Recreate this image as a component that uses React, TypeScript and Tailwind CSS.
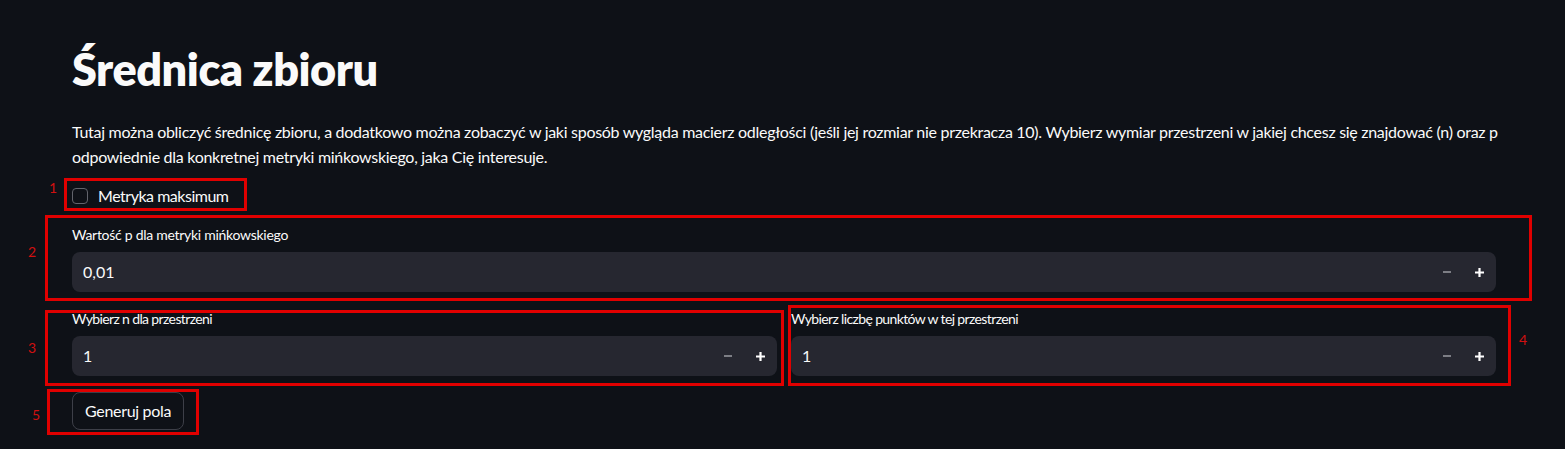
import { useState } from 'react';

const font = { fontFamily: '"Source Sans Pro", Lato, "Noto Sans", sans-serif' };

function Marker({ n, className, box }: { n: string; className: string; box: string }) {
  return (
    <>
      <div className={`pointer-events-none absolute border-[3px] border-[#e00000] ${box}`} />
      <span className={`pointer-events-none absolute text-[14px] leading-none text-[#d01010] ${className}`}>{n}</span>
    </>
  );
}

function NumberInput({ label, value, tight }: { label: string; value: string; tight?: boolean }) {
  return (
    <div className="flex flex-col">
      <label
        className={`mb-[7px] text-[14px] leading-5 text-[#fafafa] ${tight ? 'tracking-[-0.045em]' : 'tracking-[-0.02em]'}`}
      >
        {label}
      </label>
      <div className="flex h-10 items-center rounded-lg bg-[#262730] pl-[11px] pr-[1px]">
        <input
          defaultValue={value}
          className="flex-1 bg-transparent text-[16px] text-[#fafafa] outline-none"
        />
        <button className="flex h-8 w-8 items-center justify-center">
          <svg width="10" height="10" viewBox="0 0 10 10">
            <path d="M1 5h8" stroke="#7d7e85" strokeWidth="2" />
          </svg>
        </button>
        <button className="flex h-8 w-8 items-center justify-center">
          <svg width="11" height="11" viewBox="0 0 11 11">
            <path d="M1 5.5h9M5.5 1v9" stroke="#ffffff" strokeWidth="2.2" />
          </svg>
        </button>
      </div>
    </div>
  );
}

export default function App() {
  const [checked, setChecked] = useState(false);

  return (
    <div className="relative min-h-[449px] bg-[#0e1117] text-[#fafafa]" style={font}>
      <div className="w-[1496px] pl-[72px] pt-[42px]">
        <h1 className="text-[45px] font-extrabold leading-[1.2] tracking-[-0.01em]">Średnica zbioru</h1>
        <p className="mt-[23px] whitespace-nowrap text-[16px] leading-[25px] tracking-[-0.018em]">
          Tutaj można obliczyć średnicę zbioru, a dodatkowo można zobaczyć w jaki sposób wygląda macierz odległości (jeśli
          jej rozmiar nie przekracza 10). Wybierz wymiar przestrzeni w jakiej chcesz się znajdować (n) oraz p
          <br />
          odpowiednie dla konkretnej metryki mińkowskiego, jaka Cię interesuje.
        </p>

        <label className="mt-[12px] flex w-fit cursor-pointer items-center gap-[10px] py-[3px]">
          <span
            onClick={() => setChecked(!checked)}
            className="h-4 w-4 rounded-[4px] border border-[#62646c] bg-[#0e1117]"
          />
          <span className="text-[16px] leading-6 tracking-[-0.03em]">Metryka maksimum</span>
        </label>

        <div className="mt-[14px]">
          <NumberInput label="Wartość p dla metryki mińkowskiego" value="0,01" />
        </div>

        <div className="mt-[17px] grid grid-cols-2 gap-[14px]">
          <NumberInput label="Wybierz n dla przestrzeni" value="1" tight />
          <NumberInput label="Wybierz liczbę punktów w tej przestrzeni" value="1" tight />
        </div>

        <button className="mt-[16px] h-[38px] rounded-lg border border-[#3d3f48] px-[12px] text-[16px] tracking-[-0.02em] text-[#fafafa]">
          Generuj pola
        </button>
      </div>

      <Marker n="1" box="left-[64px] top-[178px] w-[183px] h-[33px]" className="left-[49px] top-[181px]" />
      <Marker n="2" box="left-[45px] top-[215px] w-[1487px] h-[86px]" className="left-[28px] top-[245px]" />
      <Marker n="3" box="left-[45px] top-[310px] w-[739px] h-[76px]" className="left-[28px] top-[341px]" />
      <Marker n="4" box="left-[788px] top-[305px] w-[723px] h-[81px]" className="left-[1519px] top-[333px]" />
      <Marker n="5" box="left-[47px] top-[389px] w-[152px] h-[46px]" className="left-[32px] top-[408px]" />
    </div>
  );
}
